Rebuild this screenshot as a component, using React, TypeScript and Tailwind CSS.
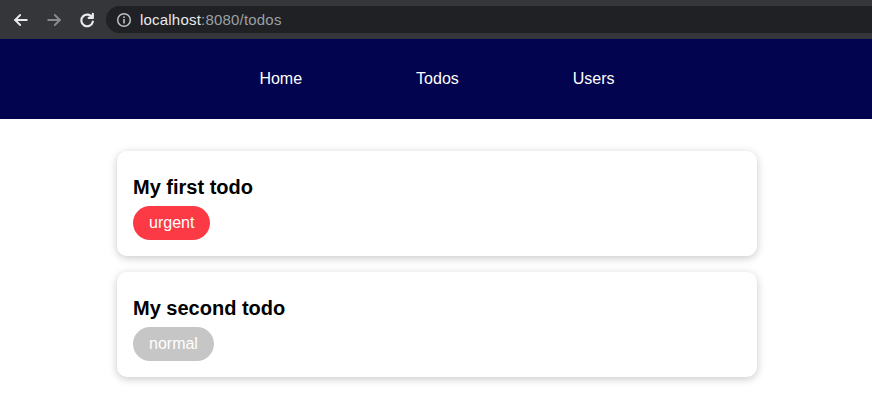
import React from "react";

const font = { fontFamily: '"Liberation Sans", Arial, Helvetica, sans-serif' };

function BrowserBar() {
  return (
    <div className="h-[39px] bg-[#35363a] flex items-center relative">
      <div className="flex items-center pl-[11px] gap-[13px]">
        <svg width="20" height="20" viewBox="0 0 24 24" fill="none" stroke="#e8eaed" strokeWidth="2.2" strokeLinecap="round" strokeLinejoin="round">
          <path d="M19 12H5" />
          <path d="M11 6l-6 6 6 6" />
        </svg>
        <svg width="20" height="20" viewBox="0 0 24 24" fill="none" stroke="#8a8b8e" strokeWidth="2.2" strokeLinecap="round" strokeLinejoin="round">
          <path d="M5 12h14" />
          <path d="M13 6l6 6-6 6" />
        </svg>
        <svg width="20" height="20" viewBox="0 0 24 24" fill="none" stroke="#e8eaed" strokeWidth="2.6" strokeLinecap="round" strokeLinejoin="round">
          <path d="M18.5 9.5A7 7 0 1 0 19 14" />
          <path d="M19 4.5v5h-5" fill="#e8eaed" />
        </svg>
      </div>
      <div className="ml-[9px] h-[27px] flex-1 bg-[#202124] rounded-l-full flex items-center pl-[10px]" style={font}>
        <svg width="16" height="16" viewBox="0 0 16 16" fill="none">
          <circle cx="8" cy="8" r="6.3" stroke="#bdc1c6" strokeWidth="1.5" />
          <rect x="7.2" y="7" width="1.6" height="4.5" fill="#bdc1c6" />
          <rect x="7.2" y="4.4" width="1.6" height="1.6" fill="#bdc1c6" />
        </svg>
        <span className="ml-[8px] text-[15px] text-[#e8eaed] tracking-[0.2px] translate-y-[1px]">localhost</span>
        <span className="text-[15px] text-[#9aa0a6] tracking-[0.2px] translate-y-[1px]">:8080/todos</span>
      </div>
    </div>
  );
}

function Card({ title, label, color }: { title: string; label: string; color: string }) {
  return (
    <div className="bg-white rounded-[10px] shadow-[0_2px_8px_rgba(0,0,0,0.22)] px-4 pt-[24px] pb-4">
      <div className="text-[20px] font-bold text-black leading-[24px]">{title}</div>
      <div className="mt-[7px] flex">
        <span className={`${color} text-white text-[16px] leading-[18px] px-4 py-2 rounded-full`}>{label}</span>
      </div>
    </div>
  );
}

export default function App() {
  return (
    <div className="w-[872px] h-[411px] bg-white overflow-hidden" style={font}>
      <BrowserBar />
      <nav className="h-[80px] bg-[#03044f] flex items-center justify-center gap-[114px] pl-[2px] text-white text-[16px]">
        <span>Home</span>
        <span>Todos</span>
        <span>Users</span>
      </nav>
      <div className="w-[640px] ml-[117px] mt-[32px] flex flex-col gap-4">
        <Card title="My first todo" label="urgent" color="bg-[#fc3a46]" />
        <Card title="My second todo" label="normal" color="bg-[#c6c6c6]" />
      </div>
    </div>
  );
}
